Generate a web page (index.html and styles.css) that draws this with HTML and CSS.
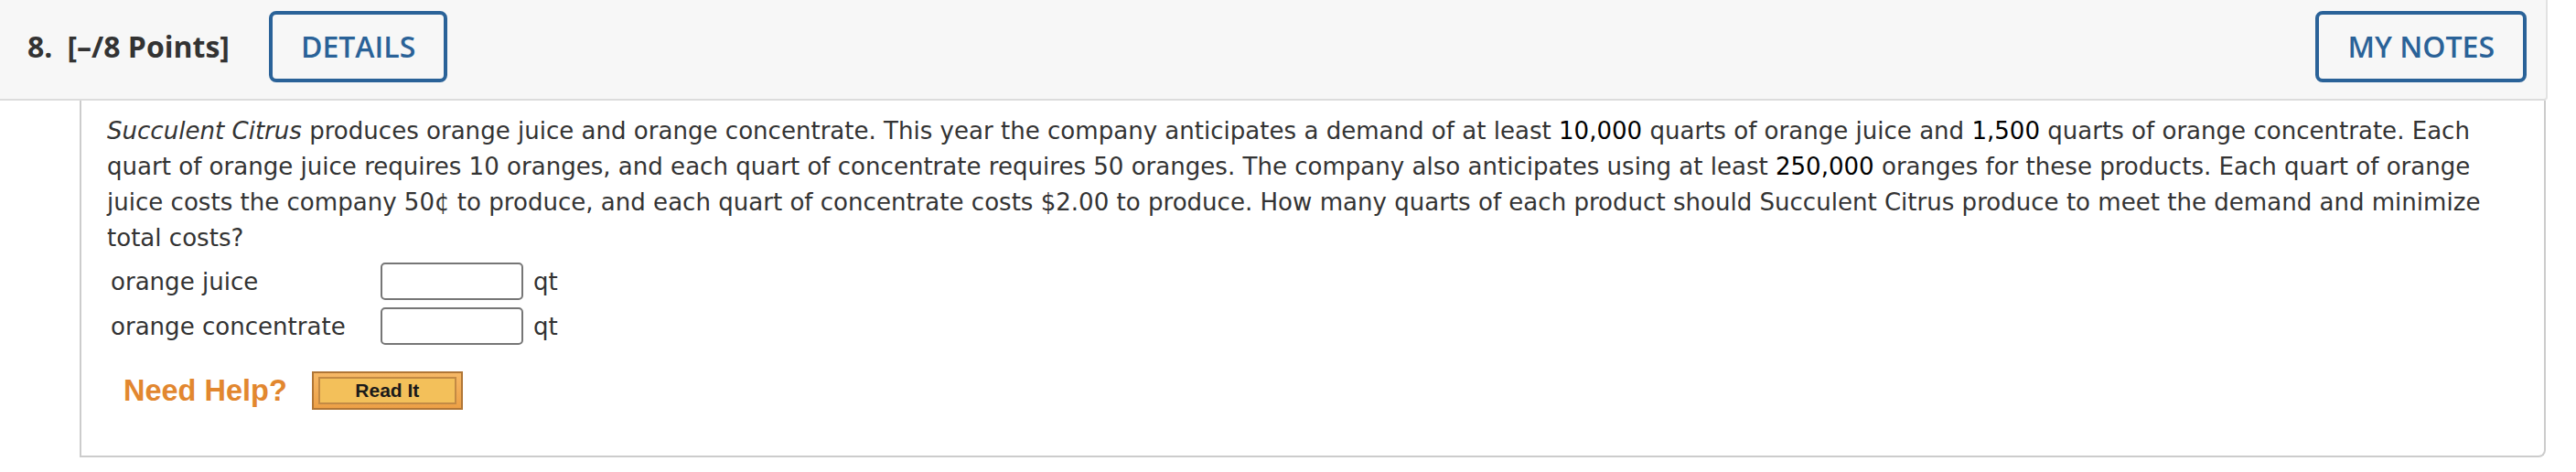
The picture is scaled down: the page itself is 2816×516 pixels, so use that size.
FILE: index.html
```html
<!DOCTYPE html>
<html>
<head>
<meta charset="utf-8">
<link rel="stylesheet" href="styles.css">
</head>
<body>
<div class="question">
  <div class="qhead">
    <div class="qtitle"><span class="qnum">8.</span><span class="qpts">[–/8 Points]</span></div>
    <button class="hbtn details">DETAILS</button>
    <div class="spacer"></div>
    <button class="hbtn notes">MY NOTES</button>
  </div>
  <div class="qbody">
    <p class="qtext"><i>Succulent Citrus</i> produces orange juice and orange concentrate. This year the company anticipates a demand of at least <span class="num">10,000</span> quarts of orange juice and <span class="num">1,500</span> quarts of orange concentrate. Each quart of orange juice requires 10 oranges, and each quart of concentrate requires 50 oranges. The company also anticipates using at least <span class="num">250,000</span> oranges for these products. Each quart of orange juice costs the company 50¢ to produce, and each quart of concentrate costs $2.00 to produce. How many quarts of each product should Succulent Citrus produce to meet the demand and minimize total costs?</p>
    <div class="answers">
      <div class="arow"><span class="alabel">orange juice</span><span class="abox"></span><span class="aunit">qt</span></div>
      <div class="arow"><span class="alabel">orange concentrate</span><span class="abox"></span><span class="aunit">qt</span></div>
    </div>
    <div class="help">
      <span class="helptext">Need Help?</span>
      <span class="readit"><span class="readit-inner">Read It</span></span>
    </div>
  </div>
</div>
</body>
</html>
```
FILE: styles.css
```css
html, body {
  margin: 0;
  padding: 0;
  background: #ffffff;
}
.question {
  width: 2785px;
}
.qhead {
  display: flex;
  align-items: flex-start;
  height: 108px;
  box-sizing: content-box;
  background: #f7f7f7;
  border-bottom: 2px solid #dcdcdc;
  border-right: 2px solid #e2e2e2;
  border-bottom-right-radius: 4px;
  padding: 0 19px 0 30px;
}
.qtitle {
  font-family: "Open Sans", sans-serif;
  font-weight: 700;
  font-size: 32px;
  color: #333333;
  margin-top: 29px;
  line-height: 44px;
  display: flex;
  gap: 16px;
}
.hbtn {
  font-family: "Open Sans", sans-serif;
  font-weight: 600;
  font-size: 32px;
  color: #2a6298;
  background: #f7f7f7;
  border: 4px solid #2a6298;
  border-radius: 8px;
  height: 78px;
  margin-top: 12px;
  padding: 0 31px;
  line-height: 1;
}
.details {
  margin-left: 43px;
}
.notes {
  margin-right: 2px;
}
.spacer {
  flex: 1;
}
.qbody {
  margin-left: 87px;
  width: 2696px;
  height: 390px;
  box-sizing: border-box;
  border: 2px solid #cccccc;
  border-top: none;
  border-bottom-right-radius: 8px;
  padding: 14px 20px 0 28px;
  font-family: "DejaVu Sans", Verdana, sans-serif;
  font-size: 26.05px;
  color: #333333;
}
.qtext {
  margin: 0;
  line-height: 39px;
}
.num {
  color: #000000;
}
.answers {
  display: flex;
  flex-direction: column;
  gap: 8px;
  margin-top: 7px;
}
.arow {
  display: flex;
  align-items: center;
  height: 41px;
}
.alabel {
  width: 295px;
  padding-left: 4px;
}
.abox {
  width: 152px;
  height: 37px;
  border: 2px solid #767676;
  border-radius: 5px;
  background: #ffffff;
}
.aunit {
  margin-left: 11px;
}
.help {
  display: flex;
  align-items: center;
  gap: 27px;
  margin-top: 29px;
  padding-left: 18px;
  height: 42px;
}
.helptext {
  font-family: "Liberation Sans", Arial, sans-serif;
  font-weight: 700;
  font-size: 32.5px;
  color: #e2872f;
}
.readit {
  display: flex;
  box-sizing: border-box;
  width: 165px;
  height: 42px;
  padding: 4px 5px;
  background: linear-gradient(#f6b866, #eda046);
  border: 2px solid #b07636;
}
.readit-inner {
  flex: 1;
  display: flex;
  align-items: center;
  justify-content: center;
  background: #f3c05a;
  border: 2px solid #c38a44;
  font-family: "Liberation Sans", Arial, sans-serif;
  font-weight: 700;
  font-size: 21px;
  color: #1a1a1a;
}
```
